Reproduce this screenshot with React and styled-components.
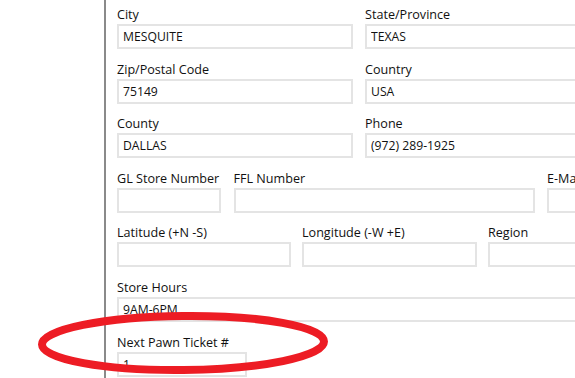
import React from "react";
import styled, { createGlobalStyle } from "styled-components";

const GlobalStyle = createGlobalStyle`
  html, body {
    margin: 0;
    padding: 0;
    background: #fff;
    overflow: hidden;
  }
  body {
    font-family: "Open Sans", "Noto Sans", sans-serif;
    color: #111;
  }
`;

const Page = styled.div`
  position: relative;
  width: 575px;
  height: 378px;
  overflow: hidden;
  display: flex;
`;

const Gutter = styled.div`
  width: 104px;
  flex: none;
`;

const Content = styled.div`
  flex: none;
  width: 600px;
  border-left: 2px solid #8a8a8a;
  padding: 5px 0 0 11px;
  display: flex;
  flex-direction: column;
  gap: 10.6px;
`;

const Row = styled.div`
  display: flex;
  gap: ${(p) => p.gap || 12}px;
`;

const Field = styled.div`
  display: flex;
  flex-direction: column;
  width: ${(p) => p.w}px;
  flex: none;
`;

const Label = styled.label`
  font-size: 12.6px;
  font-weight: 500;
  line-height: 19px;
  height: 19px;
  color: #111;
  white-space: nowrap;
`;

const Input = styled.input`
  box-sizing: border-box;
  height: 25px;
  width: 100%;
  border: 2px solid #e4e4e4;
  background: #fff;
  padding: 0 4px;
  font-family: "Open Sans", "Noto Sans", sans-serif;
  font-size: 12.2px;
  color: #111;
  outline: none;
`;

const Overlay = styled.svg`
  position: absolute;
  left: 0;
  top: 0;
  pointer-events: none;
`;

const rows = [
  {
    gap: 12,
    fields: [
      { label: "City", value: "MESQUITE", w: 236 },
      { label: "State/Province", value: "TEXAS", w: 236 },
    ],
  },
  {
    gap: 12,
    fields: [
      { label: "Zip/Postal Code", value: "75149", w: 236 },
      { label: "Country", value: "USA", w: 236 },
    ],
  },
  {
    gap: 12,
    fields: [
      { label: "County", value: "DALLAS", w: 236 },
      { label: "Phone", value: "(972) 289-1925", w: 236 },
    ],
  },
  {
    gap: 12.5,
    fields: [
      { label: "GL Store Number", value: "", w: 104 },
      { label: "FFL Number", value: "", w: 301 },
      { label: "E-Mail", value: "", w: 174 },
    ],
  },
  {
    gap: 11,
    fields: [
      { label: "Latitude (+N -S)", value: "", w: 174 },
      { label: "Longitude (-W +E)", value: "", w: 175 },
      { label: "Region", value: "", w: 174 },
    ],
  },
  {
    gap: 12,
    fields: [{ label: "Store Hours", value: "9AM-6PM", w: 548 }],
  },
  {
    gap: 12,
    fields: [{ label: "Next Pawn Ticket #", value: "1", w: 130 }],
  },
];

export default function App() {
  return (
    <>
      <GlobalStyle />
      <Page>
        <Gutter />
        <Content>
          {rows.map((row, i) => (
            <Row key={i} gap={row.gap}>
              {row.fields.map((f) => (
                <Field key={f.label} w={f.w}>
                  <Label>{f.label}</Label>
                  <Input defaultValue={f.value} />
                </Field>
              ))}
            </Row>
          ))}
        </Content>
        <Overlay width="575" height="378" viewBox="0 0 575 378">
          <ellipse
            cx="183"
            cy="343"
            rx="141"
            ry="27"
            fill="none"
            stroke="#ed1c24"
            strokeWidth="8"
            transform="rotate(-0.6 183 343)"
          />
        </Overlay>
      </Page>
    </>
  );
}
